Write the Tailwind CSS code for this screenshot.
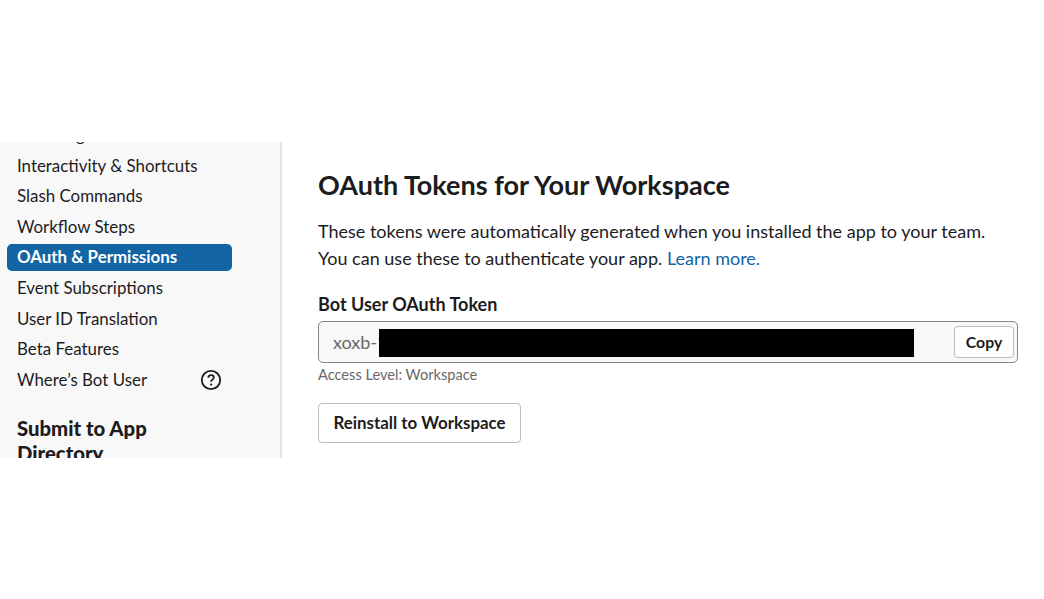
<!DOCTYPE html>
<html lang="en">
<head>
    <meta charset="UTF-8">
    <title>OAuth &amp; Permissions</title>
    <script src="https://cdn.jsdelivr.net/npm/@tailwindcss/browser@4"></script>
</head>
<body class="bg-white text-[#1d1c1d] font-['Lato','Noto_Sans',sans-serif] h-[599px] overflow-hidden pt-[142px]">
    <div class="flex h-[316px] overflow-hidden">
        <!-- Sidebar -->
        <aside class="w-[282px] shrink-0 bg-[#f8f8f8] border-r-2 border-[#e3e3e3] overflow-hidden">
            <nav class="mt-[-22px] pl-[7px] pr-[48px] text-[16.9px] leading-[30.6px]">
                <a class="block pl-[10px] h-[30.6px]">Incoming Webhooks</a>
                <a class="block pl-[10px] h-[30.6px]">Interactivity &amp; Shortcuts</a>
                <a class="block pl-[10px] h-[30.6px]">Slash Commands</a>
                <a class="block pl-[10px] h-[30.6px]">Workflow Steps</a>
                <a class="block pl-[10px] h-[27px] mt-[1.6px] mb-[2px] leading-[26px] rounded-[5px] bg-[#1264a3] text-white font-bold">OAuth &amp; Permissions</a>
                <a class="block pl-[10px] h-[30.6px]">Event Subscriptions</a>
                <a class="block pl-[10px] h-[30.6px]">User ID Translation</a>
                <a class="block pl-[10px] h-[30.6px]">Beta Features</a>
                <a class="flex items-center justify-between pl-[10px] pr-[10px] h-[30.6px]">
                    <span>Where’s Bot User</span>
                    <svg class="w-[22px] h-[22px]" viewBox="0 0 22 22" fill="none">
                        <circle cx="11" cy="11" r="9.2" stroke="#1d1c1d" stroke-width="1.8"/>
                        <path d="M8.3 8.8c0-1.6 1.2-2.6 2.8-2.6s2.7 1 2.7 2.3c0 2.2-2.7 2.1-2.7 4.2" stroke="#1d1c1d" stroke-width="1.8"/>
                        <circle cx="11.1" cy="15.6" r="1.1" fill="#1d1c1d"/>
                    </svg>
                </a>
                <h3 class="pl-[10px] mt-[21px] text-[20.3px] leading-[24.5px] font-black">Submit to App Directory</h3>
            </nav>
        </aside>
        <!-- Main -->
        <main class="flex-1 pl-[36px] pr-[26px] pt-[25px]">
            <h2 class="text-[27px] leading-[36px] font-bold">OAuth Tokens for Your Workspace</h2>
            <p class="mt-[15px] text-[18px] leading-[27px]">These tokens were automatically generated when you installed the app to your team.<br>You can use these to authenticate your app. <a class="text-[#1264a3]">Learn more.</a></p>
            <label class="block mt-[19px] text-[18px] leading-[27px] font-bold">Bot User OAuth Token</label>
            <div class="relative mt-[3px] flex items-center justify-between h-[42px] pl-[14px] pr-[2px] bg-[#f8f8f8] border border-[#868686] rounded-[5px]">
                <span class="text-[18px] text-[#696969]">xoxb-1</span>
                <span class="absolute left-[60px] top-[7px] w-[535px] h-[28px] bg-black"></span>
                <button class="h-[32px] w-[60px] mr-[1px] bg-white border border-[#bbbbbb] rounded-[4px] text-[15.8px] font-bold">Copy</button>
            </div>
            <p class="mt-[2px] text-[14.6px] leading-[20px] text-[#696969]">Access Level: Workspace</p>
            <button class="mt-[18px] h-[40px] w-[203px] bg-white border border-[#bbbbbb] rounded-[4px] text-[16.9px] font-bold">Reinstall to Workspace</button>
        </main>
    </div>
</body>
</html>
